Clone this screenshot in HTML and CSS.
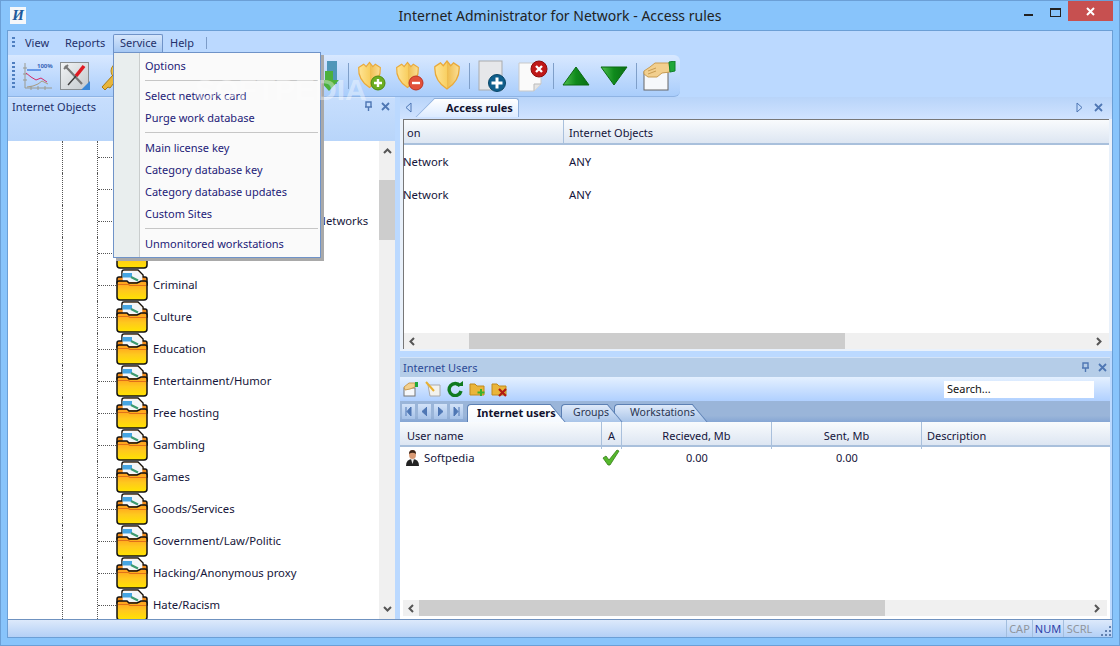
FILE: index.html
```html
<!DOCTYPE html>
<html lang="en">
<head>
  <meta charset="UTF-8">
  <title>Internet Administrator for Network - Access rules</title>
  <link rel="stylesheet" href="styles.css">
</head>
<body>

  <!-- shared gradients and repeated icons -->
  <svg class="defs" width="0" height="0">
    <defs>
      <linearGradient id="gFolder" x1="0" y1="0" x2="0" y2="1">
        <stop offset="0" stop-color="#ff9c1e"/><stop offset=".5" stop-color="#ffc81e"/><stop offset="1" stop-color="#ffe400"/>
      </linearGradient>
      <linearGradient id="gShield" x1="0" y1="0" x2="1" y2="0">
        <stop offset="0" stop-color="#ffe596"/><stop offset=".5" stop-color="#f8cf62"/><stop offset=".5" stop-color="#eebb4c"/><stop offset="1" stop-color="#fbdf96"/>
      </linearGradient>
      <linearGradient id="gGreen" x1="0" y1="0" x2="1" y2="0">
        <stop offset="0" stop-color="#4fc04f"/><stop offset=".5" stop-color="#0f8a1c"/><stop offset="1" stop-color="#0b6e14"/>
      </linearGradient>
      <linearGradient id="gBox" x1="0" y1="0" x2="1" y2="1">
        <stop offset="0" stop-color="#f2f4f5"/><stop offset="1" stop-color="#c3c9cd"/>
      </linearGradient>
      <symbol id="folder" viewBox="0 0 32 32">
        <path d="M1 14 L1 10 Q1 8 3 8 L6 8 L6 3 Q6 1 8 1 L22 1 L27 6 L27 8 L29 8 Q31 8 31 10 L31 16 Z" fill="#f08a1a" stroke="#111" stroke-width="1.5"/>
        <path d="M6.7 13 L6.7 3 Q6.7 1.8 8 1.8 L21.7 1.8 L26.3 6.3 L26.3 13 Z" fill="#f4f6f8"/>
        <rect x="6.5" y="4" width="9.5" height="4.5" fill="#45a5e2"/>
        <path d="M15 8 L22 11.5" stroke="#3c9a70" stroke-width="2.2"/>
        <path d="M1 14 Q1 12 3 12 L11 12 L13 14 L21 14 L25 12 L29 12 Q31 12 31 14 L31 28 Q31 31 28 31 L4 31 Q1 31 1 28 Z" fill="url(#gFolder)" stroke="#111" stroke-width="1.5"/>
        <path d="M2 15.5 L12.5 15.5 L14 16.5 L30 16.5" stroke="#e0701a" stroke-width="1.2" fill="none"/>
      </symbol>
      <symbol id="shield" viewBox="0 0 30 32">
        <path d="M2 7 L8 3 L11 6 L15 1 L19 6 L22 3 L28 7 Q29 22 15 31 Q1 22 2 7 Z" fill="url(#gShield)" stroke="#e9a93a" stroke-width="1.4"/>
      </symbol>
    </defs>
  </svg>

  <div class="window">

    <div class="titlebar">
      <span class="app-icon">И</span>
      <span class="title">Internet Administrator for Network - Access rules</span>
      <span class="win-min"></span>
      <span class="win-max"></span>
      <span class="win-close">
        <svg width="9" height="9" viewBox="0 0 9 9"><path d="M1 1 L8 8 M8 1 L1 8" stroke="#fff" stroke-width="2"/></svg>
      </span>
    </div>

    <div class="frame">

      <div class="menubar">
        <span class="grip"></span>
        <span class="menu-item menu-view">View</span>
        <span class="menu-item menu-reports">Reports</span>
        <span class="menu-item menu-service">Service</span>
        <span class="menu-item menu-help">Help</span>
        <span class="menu-sep"></span>
      </div>

      <div class="toolbar">
        <span class="grip grip-tall"></span>
        <span class="tool">
          <svg width="32" height="32" viewBox="0 0 32 32" fill="none">
            <path d="M4 3 V28 H31 M2 8 H6 M2 14 H6 M2 20 H6 M10 26 V30 M17 26 V30 M24 26 V30" stroke="#9a9a90"/>
            <path d="M6 10 H20" stroke="#2a6ad8" stroke-width="1.2"/>
            <path d="M5 13 L10 17 L15 20 L20 18 L26 22" stroke="#d42a6a"/>
            <path d="M6 27 L12 26 L17 24 L21 21 L27 24" stroke="#a89a80"/>
            <text x="16" y="8" class="chart-label">100%</text>
          </svg>
        </span>
        <span class="tool">
          <svg width="32" height="32" viewBox="0 0 32 32">
            <rect x="1.5" y="2.5" width="28" height="27" fill="url(#gBox)" stroke="#8a8f92"/>
            <path d="M6 6 L10 10 L23 24" stroke="#777" stroke-width="2.2" fill="none"/>
            <path d="M5 9 L9 5" stroke="#777" stroke-width="2"/>
            <path d="M25 6 L17 16" stroke="#e01a22" stroke-width="3.6"/>
            <path d="M17 16 L9 25" stroke="#3c3c3c" stroke-width="1.4"/>
            <path d="M22 30 L31 21 V30 Z" fill="#3a88d8"/>
          </svg>
        </span>
        <span class="tool">
          <svg width="32" height="32" viewBox="0 0 32 32">
            <circle cx="22" cy="11" r="8" fill="#eec24a" stroke="#b98a1c"/>
            <path d="M16 15 L5 27 L8 30 L11 27 L13 28 L20 19 Z" fill="#e8b53a" stroke="#a87a14"/>
          </svg>
        </span>
        <span class="tool-gap"></span>
        <span class="tool tool-download">
          <svg width="20" height="32" viewBox="0 0 20 32">
            <path d="M8 1 H18 V24 H8 Z" fill="#4f96b8"/>
            <path d="M6 11 H14 V20 H20 L10 31 L0 20 H6 Z" fill="#4cb03c"/>
          </svg>
        </span>
        <span class="tool-sep"></span>
        <span class="tool">
          <svg width="32" height="32" viewBox="0 0 32 32">
            <use href="#shield" x="2" width="25" height="30"/>
            <circle cx="23" cy="23" r="7" fill="#6cae22" stroke="#4d8a12"/>
            <path d="M23 19 V27 M19 23 H27" stroke="#fff" stroke-width="2.4"/>
          </svg>
        </span>
        <span class="tool">
          <svg width="32" height="32" viewBox="0 0 32 32">
            <use href="#shield" x="2" width="25" height="30"/>
            <circle cx="23" cy="23" r="7" fill="#e2503a" stroke="#bc3222"/>
            <path d="M19 23 H27" stroke="#fff" stroke-width="2.4"/>
          </svg>
        </span>
        <span class="tool">
          <svg width="32" height="32" viewBox="0 0 32 32"><use href="#shield" x="2" width="28" height="30"/></svg>
        </span>
        <span class="tool-sep"></span>
        <span class="tool tool-doc">
          <svg width="30" height="32" viewBox="0 0 30 32">
            <rect x="1" y="1" width="23" height="29" fill="#e6e7ea" stroke="#a9abae"/>
            <circle cx="19" cy="23" r="8.5" fill="#0f5f8c" stroke="#0a4668"/>
            <path d="M19 17.5 V28.5 M13.5 23 H24.5" stroke="#fff" stroke-width="3"/>
          </svg>
        </span>
        <span class="tool tool-doc">
          <svg width="32" height="32" viewBox="0 0 32 32">
            <path d="M2 3 H24 V24 L17 31 H2 Z" fill="#fafafa" stroke="#c9c9c9"/>
            <path d="M17 31 V24 H24" fill="#e4e4e4" stroke="#bbb"/>
            <circle cx="22" cy="9" r="8" fill="#c01818" stroke="#8a0e0e"/>
            <path d="M19 6 L25 12 M25 6 L19 12" stroke="#fff" stroke-width="2.4"/>
          </svg>
        </span>
        <span class="tool-sep tool-sep-tight"></span>
        <span class="tool">
          <svg width="28" height="20" viewBox="0 0 28 20"><path d="M14 1 L27 19 H1 Z" fill="url(#gGreen)" stroke="#0a6a12"/></svg>
        </span>
        <span class="tool">
          <svg width="28" height="20" viewBox="0 0 28 20"><path d="M1 1 H27 L14 19 Z" fill="url(#gGreen)" stroke="#0a6a12"/></svg>
        </span>
        <span class="tool-sep"></span>
        <span class="tool">
          <svg width="34" height="30" viewBox="0 0 34 30">
            <rect x="2" y="11" width="24" height="18" fill="#f6f8fb" stroke="#666"/>
            <path d="M2 10 L8 6 L13 2 L27 2 L28 11 L20 12 L15 16 L6 16 L2 13 Z" fill="#f2cf8e" stroke="#c99c52"/>
            <path d="M6 10 L14 7 M6 13 L14 10" stroke="#c99c52"/>
            <path d="M27 1 L33 0 L33 10 L28 11 Z" fill="#1fa83a" stroke="#12802a"/>
          </svg>
        </span>
      </div>

      <div class="panes">

        <section class="objects">
          <div class="objects-head">
            <span>Internet Objects</span>
            <span class="pane-btns">
              <svg width="9" height="11" viewBox="0 0 9 11" class="pin"><path d="M2 1 H7 V6 H2 Z M1 6 H8 M4.5 6 V10"/></svg>
              <svg width="9" height="9" viewBox="0 0 9 9" class="pane-x"><path d="M1 1 L8 8 M8 1 L1 8"/></svg>
            </span>
          </div>
          <div class="tree-wrap">
            <ul class="tree">
              <li class="tree-row"><span class="guide"></span><span class="branch"></span><svg class="folder"><use href="#folder"/></svg><span class="label">Adult</span></li>
              <li class="tree-row"><span class="guide"></span><span class="branch"></span><svg class="folder"><use href="#folder"/></svg><span class="label">Advertising</span></li>
              <li class="tree-row"><span class="guide"></span><span class="branch"></span><svg class="folder"><use href="#folder"/></svg><span class="label">Chat/Messengers/Blogs/Social Networks</span></li>
              <li class="tree-row"><span class="guide"></span><span class="branch"></span><svg class="folder"><use href="#folder"/></svg><span class="label">Corporate</span></li>
              <li class="tree-row"><span class="guide"></span><span class="branch"></span><svg class="folder"><use href="#folder"/></svg><span class="label">Criminal</span></li>
              <li class="tree-row"><span class="guide"></span><span class="branch"></span><svg class="folder"><use href="#folder"/></svg><span class="label">Culture</span></li>
              <li class="tree-row"><span class="guide"></span><span class="branch"></span><svg class="folder"><use href="#folder"/></svg><span class="label">Education</span></li>
              <li class="tree-row"><span class="guide"></span><span class="branch"></span><svg class="folder"><use href="#folder"/></svg><span class="label">Entertainment/Humor</span></li>
              <li class="tree-row"><span class="guide"></span><span class="branch"></span><svg class="folder"><use href="#folder"/></svg><span class="label">Free hosting</span></li>
              <li class="tree-row"><span class="guide"></span><span class="branch"></span><svg class="folder"><use href="#folder"/></svg><span class="label">Gambling</span></li>
              <li class="tree-row"><span class="guide"></span><span class="branch"></span><svg class="folder"><use href="#folder"/></svg><span class="label">Games</span></li>
              <li class="tree-row"><span class="guide"></span><span class="branch"></span><svg class="folder"><use href="#folder"/></svg><span class="label">Goods/Services</span></li>
              <li class="tree-row"><span class="guide"></span><span class="branch"></span><svg class="folder"><use href="#folder"/></svg><span class="label">Government/Law/Politic</span></li>
              <li class="tree-row"><span class="guide"></span><span class="branch"></span><svg class="folder"><use href="#folder"/></svg><span class="label">Hacking/Anonymous proxy</span></li>
              <li class="tree-row"><span class="guide"></span><span class="branch"></span><svg class="folder"><use href="#folder"/></svg><span class="label">Hate/Racism</span></li>
            </ul>
            <div class="vscroll">
              <svg width="9" height="6" viewBox="0 0 9 6" class="arrow"><path d="M1 5 L4.5 1.5 L8 5"/></svg>
              <span class="vthumb-space"></span>
              <span class="vthumb"></span>
              <span class="vscroll-rest"></span>
              <svg width="9" height="6" viewBox="0 0 9 6" class="arrow"><path d="M1 1 L4.5 4.5 L8 1"/></svg>
            </div>
          </div>
        </section>

        <div class="right">

          <section class="rules">
            <div class="doc-tabs">
              <svg width="7" height="11" viewBox="0 0 7 11" class="tab-scroll"><path d="M6 1 L1 5.5 L6 10 Z"/></svg>
              <span class="doc-tab">Access rules</span>
              <span class="doc-tabs-fill"></span>
              <svg width="7" height="11" viewBox="0 0 7 11" class="tab-scroll"><path d="M1 1 L6 5.5 L1 10 Z"/></svg>
              <svg width="9" height="9" viewBox="0 0 9 9" class="pane-x"><path d="M1 1 L8 8 M8 1 L1 8"/></svg>
            </div>
            <div class="doc-body">
              <div class="rules-grid">
                <div class="rules-head">
                  <span class="cell-on">on</span>
                  <span class="cell-objects">Internet Objects</span>
                </div>
                <div class="rules-row"><span class="cell-net">Network</span><span class="cell-objects">ANY</span></div>
                <div class="rules-row"><span class="cell-net">Network</span><span class="cell-objects">ANY</span></div>
                <div class="grid-fill"></div>
                <div class="hscroll">
                  <svg width="6" height="9" viewBox="0 0 6 9" class="arrow"><path d="M5 1 L1.5 4.5 L5 8"/></svg>
                  <span class="hthumb hthumb-rules"></span>
                  <span class="hscroll-rest"></span>
                  <svg width="6" height="9" viewBox="0 0 6 9" class="arrow"><path d="M1 1 L4.5 4.5 L1 8"/></svg>
                </div>
              </div>
            </div>
          </section>

          <section class="users">
            <div class="users-title">
              <span>Internet Users</span>
              <span class="pane-btns">
                <svg width="9" height="11" viewBox="0 0 9 11" class="pin"><path d="M2 1 H7 V6 H2 Z M1 6 H8 M4.5 6 V10"/></svg>
                <svg width="9" height="9" viewBox="0 0 9 9" class="pane-x"><path d="M1 1 L8 8 M8 1 L1 8"/></svg>
              </span>
            </div>
            <div class="users-tools">
              <svg width="16" height="16" viewBox="0 0 16 16">
                <rect x="1" y="7" width="11" height="8" fill="#f6f8fb" stroke="#777"/>
                <path d="M1 6 L6 2 L12 2 L12 6 L7 8 L2 9 Z" fill="#f2cf8e" stroke="#c99c52"/>
                <rect x="12" y="1" width="3" height="5" fill="#1fa83a"/>
              </svg>
              <svg width="16" height="16" viewBox="0 0 16 16">
                <path d="M3 4 H15 V15 H5 Z" fill="#f2f2ee" stroke="#aaa"/>
                <path d="M1 1 L9 10" stroke="#e8b030" stroke-width="2"/>
              </svg>
              <svg width="16" height="16" viewBox="0 0 16 16">
                <path d="M13 5 A6 6 0 1 0 14 10" fill="none" stroke="#0f7a1e" stroke-width="3.4"/>
                <path d="M9 5 H16 V0 Z" fill="#0f7a1e"/>
              </svg>
              <svg width="16" height="16" viewBox="0 0 16 16">
                <path d="M1 3 H6 L8 5 H15 V14 H1 Z" fill="#eab53a" stroke="#c08a1c"/>
                <path d="M12 8 V15 M8.5 11.5 H15.5" stroke="#3cb02c" stroke-width="2"/>
              </svg>
              <svg width="16" height="16" viewBox="0 0 16 16">
                <path d="M1 3 H6 L8 5 H15 V14 H1 Z" fill="#eab53a" stroke="#c08a1c"/>
                <path d="M8 8 L15 15 M15 8 L8 15" stroke="#b01a14" stroke-width="2.2"/>
              </svg>
              <span class="search">Search...</span>
            </div>
            <div class="users-tabs">
              <span class="nav-btn">
                <svg width="7" height="9" viewBox="0 0 7 9"><path d="M1 0 V9 M6 0 L2 4.5 L6 9 Z"/></svg>
              </span>
              <span class="nav-btn">
                <svg width="5" height="9" viewBox="0 0 5 9"><path d="M5 0 L0 4.5 L5 9 Z"/></svg>
              </span>
              <span class="nav-btn">
                <svg width="5" height="9" viewBox="0 0 5 9"><path d="M0 0 L5 4.5 L0 9 Z"/></svg>
              </span>
              <span class="nav-btn">
                <svg width="7" height="9" viewBox="0 0 7 9"><path d="M6 0 V9 M1 0 L5 4.5 L1 9 Z"/></svg>
              </span>
              <span class="user-tab user-tab-active">Internet users</span>
              <span class="user-tab user-tab-groups">Groups</span>
              <span class="user-tab user-tab-stations">Workstations</span>
            </div>
            <div class="users-head">
              <span class="col-name">User name</span>
              <span class="col-a">A</span>
              <span class="col-num">Recieved, Mb</span>
              <span class="col-num">Sent, Mb</span>
              <span class="col-desc">Description</span>
            </div>
            <div class="users-row">
              <span class="user-name">
                <svg width="15" height="17" viewBox="0 0 15 17">
                  <path d="M1 17 Q1 10 7.5 10 Q14 10 14 17 Z" fill="#222"/>
                  <path d="M6 10 L7.5 15 L9 10 Z" fill="#e8e8e8"/>
                  <ellipse cx="7.5" cy="5.5" rx="3.5" ry="4.5" fill="#d99a74"/>
                  <path d="M4 5 Q4 1 7.5 1 Q11 1 11 5 Q7.5 2.5 4 5 Z" fill="#3a2418"/>
                </svg>
                Softpedia
              </span>
              <span class="row-check">
                <svg width="18" height="17" viewBox="0 0 18 17"><path d="M1 9 L4 7 L7 11 L15 1 L17 2 L8 16 L6 16 Z" fill="#55b82c" stroke="#357d16" stroke-width=".8"/></svg>
              </span>
              <span class="col-num">0.00</span>
              <span class="col-num">0.00</span>
              <span></span>
            </div>
            <div class="grid-fill"></div>
            <div class="hscroll hscroll-users">
              <svg width="6" height="9" viewBox="0 0 6 9" class="arrow"><path d="M5 1 L1.5 4.5 L5 8"/></svg>
              <span class="hthumb hthumb-users"></span>
              <span class="hscroll-rest"></span>
              <svg width="6" height="9" viewBox="0 0 6 9" class="arrow"><path d="M1 1 L4.5 4.5 L1 8"/></svg>
            </div>
          </section>
        </div>
      </div>

      <div class="statusbar">
        <span class="status-key status-cap">CAP</span>
        <span class="status-key status-on">NUM</span>
        <span class="status-key status-scrl">SCRL</span>
        <span class="resize-grip"></span>
      </div>
    </div>

    <!-- open Service menu, lies over the toolbar and the tree -->
    <div class="dropdown">
      <div class="dd-item">Options</div>
      <div class="dd-sep"></div>
      <div class="dd-item">Select network card</div>
      <div class="dd-item">Purge work database</div>
      <div class="dd-sep"></div>
      <div class="dd-item">Main license key</div>
      <div class="dd-item">Category database key</div>
      <div class="dd-item">Category database updates</div>
      <div class="dd-item">Custom Sites</div>
      <div class="dd-sep"></div>
      <div class="dd-item">Unmonitored workstations</div>
    </div>

    <div class="watermark">SOFTPEDIA</div>
  </div>

</body>
</html>
```

FILE: styles.css
```css
* {
  box-sizing: border-box;
}

html, body {
  margin: 0;
  height: 100%;
}

body {
  font-family: "Noto Sans", "DejaVu Sans", sans-serif;
  font-size: 11px;
  color: #14143a;
  overflow: hidden;
}

.defs {
  position: absolute;
}

.window {
  position: relative;
  width: 1120px;
  height: 646px;
  display: flex;
  flex-direction: column;
  background: #88c4fb;
  border: 1px solid #6b9fd6;
}

/* title bar */

.titlebar {
  position: relative;
  flex: none;
  height: 29px;
  display: flex;
  align-items: flex-start;
}

.app-icon {
  width: 16px;
  height: 17px;
  margin: 6px 0 0 9px;
  background: #f4f7fa;
  color: #1c5a9c;
  font: italic bold 15px/17px "Liberation Serif", serif;
  text-align: center;
}

.title {
  position: absolute;
  left: 0;
  right: 0;
  top: 5px;
  text-align: center;
  font-size: 14px;
  line-height: 20px;
  color: #222;
}

.win-min {
  position: absolute;
  left: 1023px;
  top: 13px;
  width: 9px;
  height: 2px;
  background: #222;
}

.win-max {
  position: absolute;
  left: 1049px;
  top: 7px;
  width: 11px;
  height: 9px;
  border: 1px solid #222;
  border-top-width: 2px;
}

.win-close {
  position: absolute;
  left: 1067px;
  top: 0;
  width: 45px;
  height: 20px;
  background: #c75050;
  display: flex;
  align-items: center;
  justify-content: center;
}

/* main frame */

.frame {
  flex: 1;
  margin: 0 6px 7px 6px;
  border: 1px solid #6b9fd6;
  background: #bbd9ff;
  display: flex;
  flex-direction: column;
  min-height: 0;
}

.menubar {
  flex: none;
  height: 24px;
  display: flex;
  align-items: center;
  position: relative;
  color: #23306a;
}

.grip {
  width: 3px;
  height: 12px;
  margin-left: 4px;
  background: repeating-linear-gradient(#4f7fc0 0 2px, transparent 2px 4px);
}

.grip-tall {
  height: 28px;
  margin-right: 3px;
}

.menu-item {
  height: 20px;
  line-height: 19px;
}

.menu-view {
  margin-left: 10px;
  width: 40px;
}

.menu-reports {
  width: 48px;
}

.menu-service {
  width: 50px;
  margin-top: 3px;
  padding-left: 6px;
  line-height: 16px;
  height: 21px;
  background: linear-gradient(#d6e6fb, #9cc2f2);
  border: 1px solid #6f93c8;
  border-bottom: none;
  border-radius: 2px 2px 0 0;
}

.menu-help {
  margin-left: 7px;
  width: 36px;
}

.menu-sep {
  width: 1px;
  height: 12px;
  background: #7c9cc8;
}

.toolbar {
  flex: none;
  width: 672px;
  height: 42px;
  display: flex;
  align-items: center;
  background: linear-gradient(#d8e8ff, #a9cdfb);
  border-bottom: 1px solid #8fb4e4;
  border-radius: 0 6px 6px 0;
}

.toolbar .grip {
  margin-left: 4px;
}

.tool {
  flex: none;
  width: 38px;
  height: 34px;
  display: flex;
  align-items: center;
  justify-content: center;
}

.tool-gap {
  width: 186px;
  flex: none;
}

.tool-download {
  width: 22px;
  margin-right: 5px;
}

.tool-sep {
  flex: none;
  width: 1px;
  height: 26px;
  background: #7f9fc9;
  margin: 0 3px 0 3px;
}

.tool-sep-tight {
  margin-left: 0;
}

.tool-doc {
  width: 40px;
}

.chart-label {
  font-size: 6px;
  font-weight: bold;
  fill: #3a66b8;
}

/* panes */

.panes {
  flex: 1;
  display: flex;
  min-height: 0;
}

.objects {
  flex: none;
  width: 387px;
  display: flex;
  flex-direction: column;
}

.objects-head {
  flex: none;
  height: 44px;
  padding: 1px 5px 0 4px;
  display: flex;
  justify-content: space-between;
  align-items: flex-start;
  line-height: 15px;
  font-size: 11px;
  color: #22306a;
  background: linear-gradient(#c7defd, #b8d5fa);
  border-top: 1px solid #d6e6fc;
}

.pane-btns {
  display: flex;
  gap: 8px;
  align-items: center;
  height: 15px;
}

.pin path,
.pane-x path {
  fill: none;
  stroke: #4f77b4;
  stroke-width: 1.4;
}

.pane-x path {
  stroke-width: 1.8;
}

.tree-wrap {
  flex: 1;
  display: flex;
  background: #fff;
  min-height: 0;
}

.tree {
  flex: 1;
  margin: 0;
  padding: 0;
  list-style: none;
  overflow: hidden;
}

.tree-row {
  height: 32px;
  display: flex;
  align-items: center;
  padding-left: 54px;
  font-size: 11.3px;
  color: #16163a;
  white-space: nowrap;
}

.label {
  margin-bottom: 2px;
}

.guide {
  flex: none;
  width: 35px;
  align-self: stretch;
  border-left: 1px dotted #555;
}

.branch {
  flex: none;
  width: 19px;
  align-self: stretch;
  display: flex;
  align-items: center;
  border-left: 1px dotted #555;
}

.branch::before {
  content: "";
  flex: 1;
  border-top: 1px dotted #555;
}

.folder {
  flex: none;
  width: 32px;
  height: 32px;
  margin-right: 5px;
}

.vscroll {
  flex: none;
  width: 16px;
  background: #f0f0f0;
  display: flex;
  flex-direction: column;
  align-items: center;
  padding: 7px 0;
}

.vthumb-space {
  height: 26px;
}

.vthumb {
  width: 100%;
  height: 60px;
  background: #cdcdcd;
}

.vscroll-rest {
  flex: 1;
}

.arrow path {
  fill: none;
  stroke: #555;
  stroke-width: 2;
}

.right {
  flex: none;
  width: 712px;
  margin-left: 5px;
  display: flex;
  flex-direction: column;
}

/* access rules document */

.rules {
  flex: none;
  height: 254px;
  display: flex;
  flex-direction: column;
}

.doc-tabs {
  flex: none;
  height: 22px;
  display: flex;
  align-items: center;
  padding: 0 9px 2px 5px;
  background: linear-gradient(#b8d4f9, #d0e3ff);
}

.tab-scroll path {
  fill: none;
  stroke: #4f77b4;
}

.doc-tabs-fill {
  flex: 1;
}

.doc-tabs .pane-x {
  margin-left: 11px;
}

.doc-tab {
  position: relative;
  z-index: 0;
  align-self: flex-end;
  height: 19px;
  width: 84px;
  margin-left: 23px;
  padding-left: 11px;
  font-weight: bold;
  line-height: 17px;
  color: #12122e;
  white-space: nowrap;
  background: linear-gradient(#fff, #dcebff);
  border-top: 1px solid #8fb0dc;
  border-right: 1px solid #8fb0dc;
  border-radius: 0 3px 0 0;
}

.doc-tab::before {
  content: "";
  position: absolute;
  left: -10px;
  top: -1px;
  bottom: 0;
  width: 20px;
  transform: skewX(-45deg);
  background: linear-gradient(#fff, #dcebff);
  border-left: 1px solid #8fb0dc;
  border-top: 1px solid #8fb0dc;
  z-index: -1;
}

.doc-body {
  flex: 1;
  padding: 0 3px 2px 3px;
  background: #e9f1fb;
  min-height: 0;
  display: flex;
}

.rules-grid {
  flex: 1;
  background: #fff;
  border-top: 1px solid #777;
  border-left: 1px solid #777;
  display: flex;
  flex-direction: column;
}

.rules-head {
  flex: none;
  height: 25px;
  display: flex;
  font-size: 11px;
  line-height: 25px;
  background: linear-gradient(#f9fbfd, #dde6f2);
  border-bottom: 2px solid #a9c0dc;
}

.cell-on {
  flex: none;
  width: 160px;
  padding-left: 3px;
  height: 100%;
  border-right: 1px solid #a9c0dc;
}

.cell-objects {
  padding-left: 5px;
}

.rules-row {
  flex: none;
  height: 33px;
  display: flex;
  align-items: center;
  font-size: 11.3px;
}

.cell-net {
  flex: none;
  width: 160px;
  margin-left: -1px;
  margin-right: 1px;
}

.grid-fill {
  flex: 1;
}

.hscroll {
  flex: none;
  height: 16px;
  background: #f0f0f0;
  display: flex;
  align-items: center;
  padding: 0 7px 0 5px;
}

.hthumb {
  height: 16px;
  background: #cdcdcd;
  flex: none;
}

.hthumb-rules {
  width: 376px;
  margin-left: 54px;
}

.hscroll-rest {
  flex: 1;
}

/* internet users */

.users {
  flex: 1;
  margin-top: 6px;
  margin-right: 2px;
  display: flex;
  flex-direction: column;
  background: #fff;
  min-height: 0;
}

.users-title {
  flex: none;
  height: 20px;
  display: flex;
  justify-content: space-between;
  align-items: center;
  padding: 0 3px 0 3px;
  font-size: 11px;
  color: #2c4a96;
  background: #b5cde8;
  border-top: 1px solid #d3e3f7;
}

.users-tools {
  flex: none;
  height: 24px;
  display: flex;
  align-items: center;
  gap: 6px;
  padding-left: 3px;
  background: linear-gradient(#e4f0ff, #b0d0ff);
}

.search {
  margin-left: auto;
  margin-right: 16px;
  width: 150px;
  height: 17px;
  padding-left: 3px;
  line-height: 15px;
  color: #111;
  background: #fff;
}

.users-tabs {
  flex: none;
  height: 21px;
  display: flex;
  align-items: flex-end;
  padding-left: 2px;
  font-size: 10.5px;
  background: linear-gradient(#9ab5d9 70%, #86a6d4);
}

.nav-btn {
  align-self: flex-start;
  margin: 3px 3px 0 0;
  width: 13px;
  height: 15px;
  display: flex;
  align-items: center;
  justify-content: center;
  background: linear-gradient(#d2e2f8, #a6c2e8);
}

.nav-btn path {
  fill: #4f77b4;
  stroke: #4f77b4;
}

.user-tab {
  position: relative;
  z-index: 1;
  height: 18px;
  line-height: 15px;
  color: #2a3550;
  white-space: nowrap;
  background: linear-gradient(#dfeafa, #a9c4e8);
  border-top: 1px solid #5c80b4;
  border-left: 1px solid #5c80b4;
  border-radius: 4px 0 0 0;
}

.user-tab::after {
  content: "";
  position: absolute;
  right: -12px;
  top: -1px;
  bottom: 0;
  width: 20px;
  transform: skewX(40deg);
  background: linear-gradient(#dfeafa, #a9c4e8);
  border-right: 1px solid #5c80b4;
  border-top: 1px solid #5c80b4;
  z-index: -1;
}

.user-tab-active {
  z-index: 3;
  width: 79px;
  margin-left: 1px;
  padding-left: 9px;
  font-size: 11px;
  font-weight: bold;
  color: #12122e;
  background: linear-gradient(#fff, #f6faff);
}

.user-tab-active::after {
  background: linear-gradient(#fff, #f6faff);
}

.user-tab-groups {
  z-index: 2;
  width: 42px;
  margin-left: 15px;
  padding-left: 11px;
}

.user-tab-stations {
  width: 74px;
  margin-left: 11px;
  padding-left: 15px;
}

.users-head,
.users-row {
  flex: none;
  display: grid;
  grid-template-columns: 202px 20px 150px 150px 1fr;
  align-items: center;
}

.users-head {
  height: 25px;
  font-size: 11px;
  background: linear-gradient(#f9fbfd, #dde6f2);
  border-bottom: 2px solid #a9c0dc;
}

.users-head span {
  height: 100%;
  line-height: 27px;
  border-right: 1px solid #a9c0dc;
}

.users-head span:last-child {
  border-right: none;
}

.col-name {
  padding-left: 7px;
}

.col-a,
.col-num {
  text-align: center;
}

.col-desc {
  padding-left: 5px;
}

.users-row {
  height: 20px;
  font-size: 11.3px;
}

.users-row .col-num {
  font-size: 11px;
}

.user-name {
  display: flex;
  align-items: center;
  gap: 4px;
  padding-left: 5px;
}

.row-check {
  display: flex;
  justify-content: center;
  margin-left: -2px;
}

.hscroll-users {
  margin: 0 3px 3px 3px;
}

.hthumb-users {
  width: 466px;
  margin-left: 5px;
}

/* status bar */

.statusbar {
  flex: none;
  height: 18px;
  display: flex;
  justify-content: flex-end;
  align-items: center;
  font-size: 11px;
  color: #8f959d;
  background: linear-gradient(#dde9fb, #b3d0f6);
  border-top: 1px solid #6f92c0;
}

.status-key {
  width: 31px;
  height: 100%;
  line-height: 17px;
  text-align: center;
  border-left: 1px solid #a3bede;
}

.status-cap {
  width: 26px;
}

.status-scrl {
  width: 32px;
}

.status-on {
  color: #2e3fa8;
}

.resize-grip {
  width: 17px;
  height: 100%;
  border-left: 1px solid #a3bede;
  background-image: radial-gradient(#5f7fae 1px, transparent 1px);
  background-size: 4px 4px;
  background-position: right bottom;
  clip-path: polygon(100% 20%, 100% 100%, 20% 100%);
}

/* open menu */

.dropdown {
  position: absolute;
  left: 112px;
  top: 51px;
  width: 208px;
  height: 206px;
  padding: 2px 2px 0 1px;
  background: linear-gradient(90deg, #e9eeee 25px, #c9cdcd 25px, #c9cdcd 26px, #fafafa 26px);
  border: 1px solid #6f93c8;
  box-shadow: 3px 3px 0 #a9a9a9;
  z-index: 5;
}

.dd-item {
  height: 22px;
  line-height: 22px;
  padding-left: 30px;
  color: #1d1b78;
}

.dd-sep {
  height: 8px;
  margin: 0 0 0 30px;
  background: linear-gradient(#c6c6c6, #c6c6c6) center / 100% 1px no-repeat;
  position: relative;
  top: -1px;
}

.watermark {
  position: absolute;
  left: 194px;
  top: 72px;
  font: bold 30px "Liberation Sans", sans-serif;
  color: rgba(255, 255, 255, .4);
  z-index: 6;
  pointer-events: none;
}
```
